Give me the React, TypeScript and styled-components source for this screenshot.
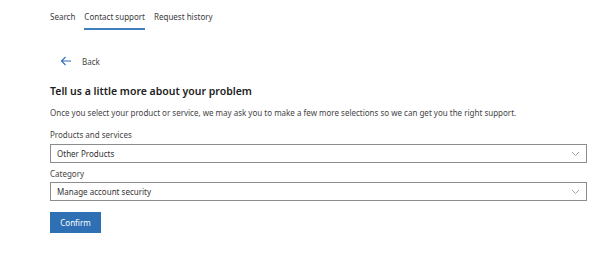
import styled, { createGlobalStyle } from "styled-components";

const GlobalStyle = createGlobalStyle`
  body {
    margin: 0;
    background: #ffffff;
    font-family: "Noto Sans", "Open Sans", sans-serif;
    color: #333333;
  }
`

const Page = styled.div`
  display: flex;
  flex-direction: column;
  padding: 0 20px 0 50px;
`

const TabBar = styled.nav`
  display: flex;
  gap: 9px;
  padding-top: 9px;
`

const Tab = styled.span<{ $active?: boolean }>`
  font-size: 8px;
  line-height: 16px;
  padding-bottom: 3px;
  color: #3a3a3a;
  border-bottom: 2px solid ${(p) => (p.$active ? "#3f7fbf" : "transparent")};
`

const BackRow = styled.div`
  display: flex;
  align-items: center;
  gap: 10px;
  height: 16px;
  margin-top: 23px;
  padding-left: 10px;
  font-size: 8px;
  color: #444444;
`

const Heading = styled.h1`
  margin: 13px 0 0;
  font-size: 10.5px;
  line-height: 18px;
  font-weight: 600;
  color: #222222;
`

const Description = styled.p`
  margin: 6px 0 0;
  font-size: 8px;
  line-height: 14px;
  color: #444444;
`

const Label = styled.label<{ $gap: number }>`
  display: block;
  margin-top: ${(p) => p.$gap}px;
  font-size: 8px;
  line-height: 14px;
  color: #444444;
`

const Select = styled.div<{ $gap: number }>`
  display: flex;
  align-items: center;
  justify-content: space-between;
  box-sizing: border-box;
  height: 19px;
  margin-top: ${(p) => p.$gap}px;
  padding: 0 6px 0 6px;
  border: 1px solid #8c8c8c;
  font-size: 8px;
  color: #333333;
`

const Button = styled.button`
  align-self: flex-start;
  width: 51px;
  height: 21px;
  margin-top: 11px;
  border: none;
  background: #2f6fb3;
  color: #ffffff;
  font-family: inherit;
  font-size: 8px;
  padding: 0;
`

const Chevron = () => (
  <svg width="9" height="6" viewBox="0 0 9 6">
    <polyline points="1,1 4.5,4.5 8,1" fill="none" stroke="#9a9a9a" strokeWidth="0.9" />
  </svg>
)

const BackArrow = () => (
  <svg width="12" height="10" viewBox="0 0 12 10">
    <path d="M11 5 H1.5 M5.5 1 L1.5 5 L5.5 9" fill="none" stroke="#2f6fb3" strokeWidth="1.1" />
  </svg>
)

export default function App() {
  return (
    <Page>
      <GlobalStyle />
      <TabBar>
        <Tab>Search</Tab>
        <Tab $active>Contact support</Tab>
        <Tab>Request history</Tab>
      </TabBar>

      <BackRow>
        <BackArrow />
        <span>Back</span>
      </BackRow>

      <Heading>Tell us a little more about your problem</Heading>
      <Description>
        Once you select your product or service, we may ask you to make a few more selections so we can get you the right support.
      </Description>

      <Label $gap={8}>Products and services</Label>
      <Select $gap={2}>
        <span>Other Products</span>
        <Chevron />
      </Select>

      <Label $gap={4}>Category</Label>
      <Select $gap={1}>
        <span>Manage account security</span>
        <Chevron />
      </Select>

      <Button>Confirm</Button>
    </Page>
  )
}
